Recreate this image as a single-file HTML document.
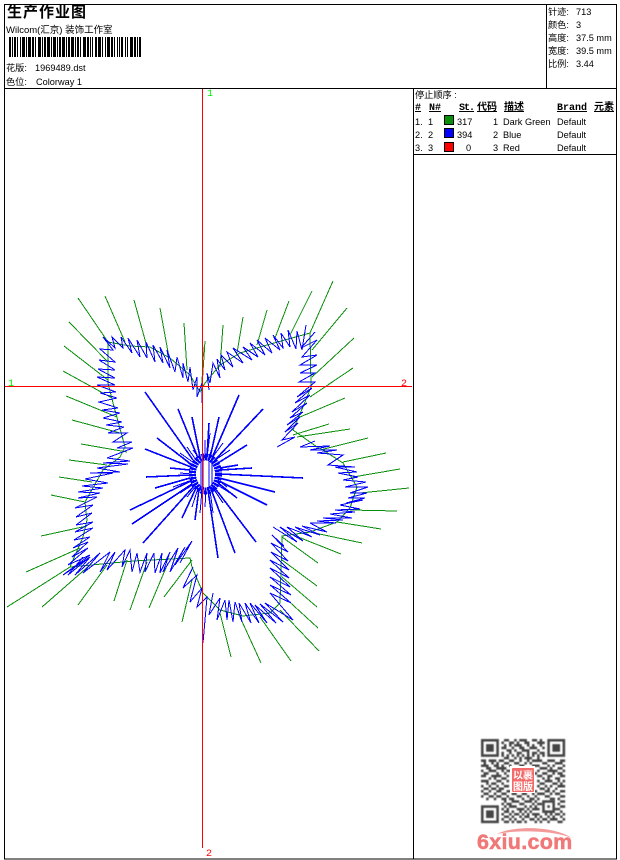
<!DOCTYPE html>
<html lang="zh">
<head>
<meta charset="utf-8">
<title>生产作业图</title>
<style>
html,body{margin:0;padding:0;background:#fff;width:620px;height:860px;overflow:hidden}
svg{display:block;position:absolute;left:0;top:0}
text{font-family:"Liberation Sans","WenQuanYi Zen Hei","Noto Sans CJK SC",sans-serif;font-size:9.2px;fill:#000}
.b{font-family:"Liberation Mono","WenQuanYi Zen Hei","Noto Sans CJK SC",monospace;font-size:10px;font-weight:bold;text-decoration:underline}
.ax{font-family:"Liberation Mono",monospace;font-size:10px}
</style>
</head>
<body>
<svg width="620" height="860" viewBox="0 0 620 860" xmlns="http://www.w3.org/2000/svg">
<defs><filter id="s" x="-5%" y="-5%" width="110%" height="110%"><feGaussianBlur stdDeviation=".45"/></filter></defs>
<!-- frame -->
<g fill="none" stroke="#000" stroke-width="1" shape-rendering="crispEdges">
<rect x="4.5" y="4.5" width="612" height="854.5"/>
<path d="M4 88.5H617M546.5 4V88M413.5 88V859M413 154.5H617"/>
</g>

<!-- header text -->
<text x="7" y="17" style="font-size:15px;font-weight:bold;letter-spacing:1px">生产作业图</text>
<text x="6" y="33" style="font-size:9.5px">Wilcom(汇京) 装饰工作室</text>
<path fill="#000" d="M9 37h2v20h-2zM12 37h1v20h-1zM14 37h2v20h-2zM17 37h1v20h-1zM20 37h1v20h-1zM22 37h3v20h-3zM26 37h1v20h-1zM28 37h3v20h-3zM32 37h2v20h-2zM35 37h1v20h-1zM38 37h3v20h-3zM42 37h1v20h-1zM44 37h2v20h-2zM47 37h3v20h-3zM51 37h1v20h-1zM53 37h3v20h-3zM57 37h1v20h-1zM59 37h2v20h-2zM62 37h3v20h-3zM66 37h1v20h-1zM68 37h2v20h-2zM71 37h3v20h-3zM75 37h1v20h-1zM77 37h2v20h-2zM80 37h1v20h-1zM83 37h3v20h-3zM87 37h2v20h-2zM90 37h1v20h-1zM92 37h1v20h-1zM95 37h2v20h-2zM98 37h3v20h-3zM102 37h1v20h-1zM105 37h1v20h-1zM107 37h3v20h-3zM111 37h2v20h-2zM114 37h1v20h-1zM117 37h1v20h-1zM119 37h1v20h-1zM121 37h2v20h-2zM125 37h1v20h-1zM127 37h1v20h-1zM130 37h3v20h-3zM134 37h2v20h-2zM137 37h1v20h-1zM139 37h2v20h-2z"/>
<text x="6" y="71">花版:</text><text x="35" y="71">1969489.dst</text>
<text x="6" y="85">色位:</text><text x="36" y="85">Colorway 1</text>

<text x="548" y="15">针迹:</text><text x="576" y="15">713</text>
<text x="548" y="28">颜色:</text><text x="576" y="28">3</text>
<text x="548" y="41">高度:</text><text x="576" y="41">37.5 mm</text>
<text x="548" y="54">宽度:</text><text x="576" y="54">39.5 mm</text>
<text x="548" y="67">比例:</text><text x="576" y="67">3.44</text>

<!-- table -->
<text x="415" y="98">停止顺序 :</text>
<text class="b" x="415" y="110">#</text>
<text class="b" x="429" y="110">N#</text>
<text class="b" x="459" y="110" style="letter-spacing:-1px">St.</text>
<text class="b" x="477" y="110">代码</text>
<text class="b" x="504" y="110">描述</text>
<text class="b" x="557" y="110">Brand</text>
<text class="b" x="594" y="110">元素</text>

<text x="415" y="125">1.</text><text x="428" y="125">1</text><text x="457" y="125">317</text><text x="493" y="125">1</text><text x="503" y="125">Dark Green</text><text x="557" y="125">Default</text>
<text x="415" y="138">2.</text><text x="428" y="138">2</text><text x="457" y="138">394</text><text x="493" y="138">2</text><text x="503" y="138">Blue</text><text x="557" y="138">Default</text>
<text x="415" y="151">3.</text><text x="428" y="151">3</text><text x="466" y="151">0</text><text x="493" y="151">3</text><text x="503" y="151">Red</text><text x="557" y="151">Default</text>
<g stroke="#000" shape-rendering="crispEdges">
<rect x="444.5" y="115.5" width="9" height="9" fill="#0a8f0a"/>
<rect x="444.5" y="128.5" width="9" height="9" fill="#0000ff"/>
<rect x="444.5" y="142.5" width="9" height="9" fill="#ff0000"/>
</g>

<!-- green jump stitches -->
<g fill="none" stroke="#0a8f0a" stroke-width="1" shape-rendering="crispEdges">
<path d="M108 342L130 346L150 347L170 358L190 375L200 392L205 383L220 365L240 353L267 345L310 333L311 387L303 407L293 430L317 447L323 450L343 463L357 487L350 508L337 522L310 532L282 536L280 603L270 613L243 616L220 610L203 593L192 567L190 558L133 561L70 567L83 537L87 520L85 502L103 470L120 457L125 447L113 403L108 383Z"/>
<path d="M78 298L108 342M105 296L125 342M134 300L147 347M160 308L168 352M184 323L187 370M203 347L202 387M69 322L108 362M64 346L108 380M63 371L112 398M66 396L117 417M72 420L120 433M81 444L127 452M69 460L107 465M59 477L92 482M51 495L85 502M41 536L87 526M26 572L80 548M7 607L70 567M42 607L90 565M78 605L107 565M114 601L127 560M130 610L147 562M149 608L168 563M164 597L192 560M182 622L192 580"/>
<path d="M333 281L310 333M312 291L290 335M289 301L275 338M267 310L257 345M243 317L237 353M223 325L220 367M205 341L202 387M347 308L312 350M354 338L312 377M353 368L310 397M345 398L300 417M329 424L293 435M350 429L297 437M368 438L320 450M386 453L343 462M400 469L353 477M409 488L360 493M397 511L350 510M381 529L337 522M362 543L310 532M341 554L293 535M318 563L282 537M317 586L282 560M317 607L282 577M318 628L282 595M319 651L280 610M291 661L260 617M261 663L240 617M231 657L220 613"/>
</g>

<!-- blue zigzag satin -->
<g fill="none" stroke="#0000ff" stroke-width="1" shape-rendering="crispEdges" stroke-linejoin="miter">
<polyline points="103,337 115,348 112,337 123,348 121,337 132,353 128,338 140,357 137,340 147,358 146,342 155,362 153,345 163,363 160,347 170,368 167,350 175,372 177,357 183,378 183,363 188,382 190,367 193,390 197,377 197,397 202,383 202,403"/>
<polyline points="103,337 113,350 100,349 115,362 99,360 115,370 98,369 115,378 97,377 115,385 97,385 116,392 100,393 117,398 99,402 118,408 102,410 120,413 103,418 122,422 106,425 124,427 108,433 127,433 113,442 132,442 117,448 133,448 107,458 130,461 103,463 128,464 97,468 120,472 90,473 113,473 85,479 108,483 82,486 103,488 78,492 100,493 78,498 97,497 75,508 93,505 76,517 92,513 76,525 93,522 75,532 93,528 74,540 90,537 73,548 88,542 72,557 88,548 68,565 90,555 63,575 90,557"/>
<polyline points="83,557 68,575 90,557 75,575 100,553 83,573 110,552 100,572 115,552 107,570 125,550 122,567 130,550 132,572 137,553 140,572 147,553 145,572 154,553 155,573 162,553 160,573 170,552 163,572 178,548 170,572 185,547 175,565 192,541 180,563"/>
<polyline points="193,567 183,588 197,575 190,602 202,588 197,607 207,597 203,643"/>
<polyline points="213,593 209,615 220,598 217,620 225,600 227,620 229,600 233,622 235,602 242,622 239,603 251,623 245,603 259,623 250,603 267,623 255,605 276,623 260,604 283,622 265,603 293,620 270,593 291,603 270,585 291,595 270,577 290,587 270,568 289,578 270,560 289,570 271,552 288,561 271,543 288,552 272,535 284,546"/>
<polyline points="273,527 297,542 280,527 303,541 287,527 312,537 295,527 320,535 302,526 327,532 310,523 336,523 317,521 343,520 323,518 352,518 330,514 355,512 335,510 360,509 340,505 363,500 346,503 365,498 348,498 367,493 350,493 368,487 345,487 366,482 343,480 358,477 338,473 357,472 335,467 355,467 328,465 343,455 317,453 337,450 310,450 330,446 300,447 315,441"/>
<polyline points="277,447 295,437 282,440 298,423 285,432 300,417 287,425 303,412 290,418 307,403 292,412 310,395 295,403 312,388 297,397 315,382 299,382 315,373 300,373 317,365 300,365 317,355 302,357 317,340 301,348 315,332"/>
<polyline points="209,390 207,373 210,383 213,363 220,378 217,359 225,370 221,355 233,367 227,352 243,363 233,348 252,360 243,347 258,357 250,343 265,355 257,340 272,353 265,338 280,350 273,335 283,348 281,333 290,347 288,330 296,349 297,331 302,350 306,325"/>
</g>

<!-- blue centre radial -->
<g fill="none" stroke="#0000ff" stroke-width="1.6" shape-rendering="crispEdges">
<path d="M145 392L193 460M178 409L198 458M192 417L200 457M209 423L207 457M219 417L210 458M239 395L212 458M263 409L215 460M247 445L218 463M157 438L192 465M145 449L191 467M170 468L190 470M146 477L190 475M155 488L190 478M130 510L191 481M132 524L192 484M143 543L194 486M182 518L196 488M195 520L199 489M218 558L208 490M235 553L211 489M256 542L214 487M237 498L218 483M267 505L219 481M275 492L219 478M303 478L220 474M252 468L220 470M238 465L220 468"/>
<path stroke-width="1" d="M228 466L218 470M180 473L192 474M183 480L192 478M173 487L192 480M180 493L194 484M187 497L196 486M192 507L198 488M200 513L202 490M205 507L206 490M213 513L210 490M223 503L213 488M230 493L216 484M227 487L218 480M210 433L207 458M205 440L205 458M215 437L209 458M223 443L212 458M230 450L215 460M187 447L196 460M180 453L194 463M185 460L192 466M193 450L199 458"/>
<ellipse cx="205.500" cy="474" rx="13" ry="17" stroke-width="7" stroke-dasharray="2.500 .7"/>
<path d="M201 458V492M203 455V494M209 454V494M212 457V492" stroke-width="1"/>
</g>

<!-- red axes -->
<g stroke="#ff0000" stroke-width="1" shape-rendering="crispEdges">
<path d="M5 386.500H412M202.500 89V848"/>
</g>
<text class="ax" x="207" y="96" style="fill:#00ee00">1</text>
<text class="ax" x="8" y="386" style="fill:#00ee00">1</text>
<text class="ax" x="401" y="386" style="fill:#ff0000">2</text>
<text class="ax" x="206" y="856" style="fill:#ff0000">2</text>

<!-- QR code -->
<g filter="url(#s)">
<g transform="translate(481 739) scale(2.55)">
<path fill="none" stroke="#444" stroke-width="1" d="M9 .5h2M13 .5h1M15 .5h3M20 .5h2M23 .5h1M8 1.500h1M11 1.500h2M14 1.500h1M17 1.500h2M22 1.500h3M9 2.500h1M11 2.500h1M13 2.500h3M18 2.500h1M20 2.500h1M23 2.500h1M8 3.500h2M12 3.500h1M15 3.500h2M19 3.500h3M24 3.500h1M10 4.500h2M13 4.500h1M16 4.500h3M22 4.500h1M8 5.500h1M11 5.500h1M14 5.500h2M18 5.500h1M20 5.500h2M23 5.500h2M8 6.500h1M10 6.500h1M12 6.500h1M14 6.500h1M16 6.500h1M18 6.500h1M20 6.500h1M22 6.500h1M24 6.500h1M9 7.500h2M13 7.500h1M15 7.500h1M17 7.500h3M22 7.500h1M0 8.500h2M3 8.500h3M7 8.500h2M11 8.500h2M15 8.500h1M18 8.500h1M20 8.500h4M26 8.500h3M31 8.500h2M1 9.500h1M4 9.500h1M6 9.500h1M9 9.500h2M13 9.500h2M17 9.500h1M19 9.500h1M24 9.500h2M29 9.500h3M0 10.500h3M5 10.500h2M8 10.500h1M11 10.500h1M15 10.500h2M20 10.500h3M26 10.500h1M28 10.500h1M32 10.500h1M2 11.500h2M6 11.500h4M12 11.500h3M17 11.500h1M23 11.500h3M27 11.500h1M30 11.500h2M0 12.500h1M3 12.500h3M8 12.500h1M10 12.500h2M14 12.500h1M18 12.500h3M22 12.500h1M26 12.500h4M32 12.500h1M1 13.500h2M6 13.500h1M9 13.500h1M12 13.500h2M16 13.500h1M21 13.500h1M24 13.500h2M28 13.500h1M30 13.500h2M0 14.500h2M4 14.500h4M10 14.500h1M22 14.500h2M26 14.500h2M31 14.500h2M3 15.500h1M5 15.500h1M8 15.500h2M24 15.500h1M26 15.500h1M29 15.500h2M0 16.500h3M6 16.500h2M10 16.500h1M22 16.500h1M25 16.500h3M30 16.500h1M32 16.500h1M2 17.500h1M4 17.500h2M8 17.500h1M23 17.500h2M28 17.500h2M31 17.500h1M0 18.500h1M3 18.500h1M6 18.500h1M9 18.500h2M22 18.500h1M25 18.500h1M27 18.500h1M30 18.500h3M1 19.500h2M4 19.500h2M7 19.500h2M23 19.500h2M26 19.500h1M29 19.500h1M0 20.500h1M3 20.500h1M6 20.500h2M10 20.500h2M14 20.500h2M18 20.500h2M21 20.500h1M25 20.500h2M28 20.500h1M31 20.500h2M1 21.500h2M5 21.500h1M8 21.500h2M12 21.500h2M16 21.500h2M20 21.500h1M22 21.500h3M27 21.500h1M29 21.500h2M0 22.500h1M3 22.500h2M6 22.500h2M10 22.500h1M14 22.500h2M18 22.500h1M21 22.500h1M25 22.500h2M31 22.500h2M2 23.500h1M5 23.500h1M8 23.500h2M11 23.500h2M16 23.500h1M19 23.500h2M22 23.500h1M27 23.500h2M30 23.500h1M9 24.500h1M12 24.500h3M17 24.500h3M21 24.500h1M31 24.500h2M8 25.500h1M10 25.500h2M15 25.500h2M20 25.500h1M22 25.500h2M30 25.500h1M9 26.500h1M11 26.500h3M17 26.500h1M19 26.500h1M21 26.500h1M31 26.500h2M8 27.500h1M10 27.500h1M14 27.500h3M18 27.500h1M20 27.500h3M29 27.500h2M9 28.500h2M12 28.500h1M15 28.500h1M17 28.500h1M19 28.500h1M31 28.500h1M8 29.500h1M11 29.500h1M13 29.500h2M16 29.500h1M18 29.500h1M20 29.500h3M25 29.500h1M27 29.500h1M29 29.500h2M32 29.500h1M9 30.500h2M12 30.500h1M15 30.500h1M17 30.500h2M21 30.500h1M23 30.500h1M26 30.500h1M28 30.500h1M31 30.500h1M8 31.500h1M11 31.500h1M13 31.500h1M16 31.500h1M19 31.500h2M22 31.500h1M24 31.500h2M27 31.500h3M32 31.500h1M9 32.500h2M12 32.500h1M14 32.500h2M17 32.500h1M21 32.500h1M23 32.500h1M26 32.500h1M30 32.500h2"/>
<g fill="none" stroke="#444" stroke-width="1">
<rect x=".5" y=".5" width="6" height="6"/><rect x="26.500" y=".5" width="6" height="6"/><rect x=".5" y="26.500" width="6" height="6"/><rect x="24.500" y="24.500" width="4" height="4"/>
</g>
<path fill="#444" d="M2 2h3v3h-3zM28 2h3v3h-3zM2 28h3v3h-3zM26 26h1v1h-1z"/>
</g>
</g>
<rect x="510" y="766" width="25" height="27" fill="#fff"/>
<rect x="512" y="768" width="22" height="24" fill="#f46a6a" rx="1"/>
<text x="513" y="779" style="fill:#fff;font-size:10px;font-weight:bold">以</text><text x="523" y="779" style="fill:#fff;font-size:10px;font-weight:bold">裹</text>
<text x="513" y="790" style="fill:#fff;font-size:10px;font-weight:bold">图</text><text x="523" y="790" style="fill:#fff;font-size:10px;font-weight:bold">版</text>

<!-- 6xiu logo -->
<path d="M497 834C512 826 552 825 572 838C552 830 515 830 497 834Z" fill="#f39a9a"/>
<text x="477" y="849" style="font-family:'Liberation Sans',sans-serif;font-weight:bold;font-size:21.500px;fill:#f07878;stroke:#f07878;stroke-width:.5px;letter-spacing:.3px">6xiu.com</text>
</svg>
</body>
</html>
